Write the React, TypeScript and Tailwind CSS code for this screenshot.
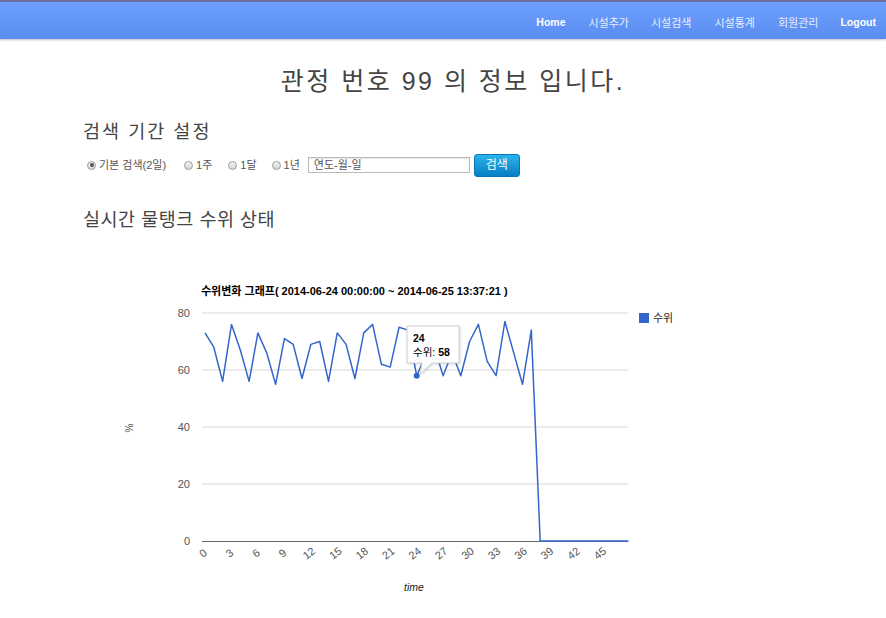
import React from "react";

const data = [73,68,56,76,67,56,73,66,55,71,69,57,69,70,56,73,69,57,73,76,62,61,75,74,58,65,68,58,66,58,70,76,63,58,77,66,55,74,0,0,0,0,0,0,0,0,0,0,0];
const X0 = 205;
const DX = 8.82;
const Y0 = 541;
const KY = 2.85;
const px = (i: number) => X0 + i * DX;
const py = (v: number) => Y0 - v * KY;

function Radio({ checked }: { checked?: boolean }) {
  return (
    <span className="inline-flex w-[9px] h-[9px] rounded-full border border-[#9a9a9a] bg-gradient-to-b from-[#f4f4f4] to-[#d6d6d6] items-center justify-center mr-[3px]">
      {checked && <span className="w-[4px] h-[4px] rounded-full bg-[#555]" />}
    </span>
  );
}

function Chart() {
  const OFF = 250;
  const pts = data.map((v, i) => `${px(i).toFixed(1)},${py(v).toFixed(1)}`).join(" ");
  const xl = [0,3,6,9,12,15,18,21,24,27,30,33,36,39,42,45];
  return (
    <svg width={886} height={368} className="block" style={{ fontFamily: '"Liberation Sans", "Noto Sans CJK KR", sans-serif' }}>
      <defs>
        <filter id="sh" x="-20%" y="-20%" width="140%" height="140%">
          <feDropShadow dx="1" dy="1" stdDeviation="1" floodColor="#000" floodOpacity="0.15" />
        </filter>
      </defs>
      <g transform={`translate(0,${-OFF})`}>
        <text x={201} y={295} fontSize={11} fontWeight={700} fill="#000">수위변화 그래프( 2014-06-24 00:00:00 ~ 2014-06-25 13:37:21 )</text>
        {[80, 60, 40, 20].map((v) => (
          <line key={v} x1={202} x2={628} y1={py(v)} y2={py(v)} stroke="#d9d9d9" strokeWidth={1} />
        ))}
        {[80, 60, 40, 20, 0].map((v) => (
          <text key={v} x={190} y={py(v) + 4} fontSize={11} fill="#555" textAnchor="end">{v}</text>
        ))}
        <line x1={202} x2={628} y1={Y0 + 0.5} y2={Y0 + 0.5} stroke="#666" strokeWidth={1} />
        <polyline points={pts} fill="none" stroke="#3366cc" strokeWidth={1.5} strokeLinejoin="round" />
        {xl.map((v) => {
          const x = px(v) - 2;
          return (
            <text key={v} x={x} y={557} fontSize={11} fill="#555" textAnchor="middle" transform={`rotate(-38 ${x} 553)`}>{v}</text>
          );
        })}
        <text x={0} y={0} fontSize={10} fill="#555" transform="translate(133,428) rotate(-90)" textAnchor="middle">%</text>
        <text x={414} y={591} fontSize={10.5} fill="#222" fontStyle="italic" textAnchor="middle">time</text>
        <rect x={639} y={313} width={10} height={10} fill="#3366cc" />
        <text x={653} y={322} fontSize={11} fill="#222">수위</text>
        <circle cx={px(24)} cy={py(58)} r={3} fill="#3366cc" />
        <path d="M407 326 H459 V363 H432 L420 374 L422 363 H407 Z" fill="#fff" stroke="#cccccc" strokeWidth={1} filter="url(#sh)" />
        <text x={413} y={342} fontSize={10.5} fontWeight={700} fill="#000">24</text>
        <text x={413} y={356} fontSize={10.5} fill="#000">수위: <tspan fontWeight={700}>58</tspan></text>
      </g>
    </svg>
  );
}

export default function App() {
  return (
    <div className="w-[886px] h-[618px] bg-white overflow-hidden" style={{ fontFamily: '"Liberation Sans", "Noto Sans CJK KR", sans-serif' }}>
      <div className="h-[39px] border-t-2 border-[#6a6f9e] bg-gradient-to-b from-[#6ea0ff] to-[#5a8cf0] shadow-[0_1px_2px_rgba(0,0,0,0.25)] flex items-center justify-end pr-[10px] pt-[5px] text-[11px] text-[#e8eeff]">
        <span className="font-bold text-white text-[10.5px] mr-[23px]">Home</span>
        <span className="mr-[22px]">시설추가</span>
        <span className="mr-[23px]">시설검색</span>
        <span className="mr-[23px]">시설통계</span>
        <span className="mr-[22px]">회원관리</span>
        <span className="font-bold text-white text-[10.5px]">Logout</span>
      </div>
      <div className="mt-[26px] h-[32px] pl-[20px] text-center text-[25px] tracking-[2.5px] leading-[32px] text-[#444]">관정 번호 99 의 정보 입니다.</div>
      <div className="mt-[23px] ml-[83px] h-[24px] text-[18.5px] tracking-[2px] leading-[24px] text-[#444]">검색 기간 설정</div>
      <div className="mt-[9px] ml-[87px] h-[24px] flex items-center text-[11px] text-[#555]">
        <label className="flex items-center mr-[18px]"><Radio checked />기본 검색(2일)</label>
        <label className="flex items-center mr-[16px]"><Radio />1주</label>
        <label className="flex items-center mr-[15px]"><Radio />1달</label>
        <label className="flex items-center mr-[8px]"><Radio />1년</label>
        <div className="w-[162px] h-[16px] border border-[#bbb] shadow-[inset_0_1px_1px_rgba(0,0,0,0.1)] px-[5px] text-[11px] leading-[14px] text-[#555] mr-[4px]">연도-월-일</div>
        <button className="w-[46px] h-[23px] rounded-[3px] bg-gradient-to-b from-[#2ab3ea] to-[#087fc4] border border-[#0a78b8] text-white text-[12px] leading-[21px]">검색</button>
      </div>
      <div className="mt-[31px] ml-[83px] h-[24px] text-[18.5px] tracking-[0.5px] leading-[24px] text-[#444]">실시간 물탱크 수위 상태</div>
      <div className="mt-[18px]">
        <Chart />
      </div>
    </div>
  );
}
